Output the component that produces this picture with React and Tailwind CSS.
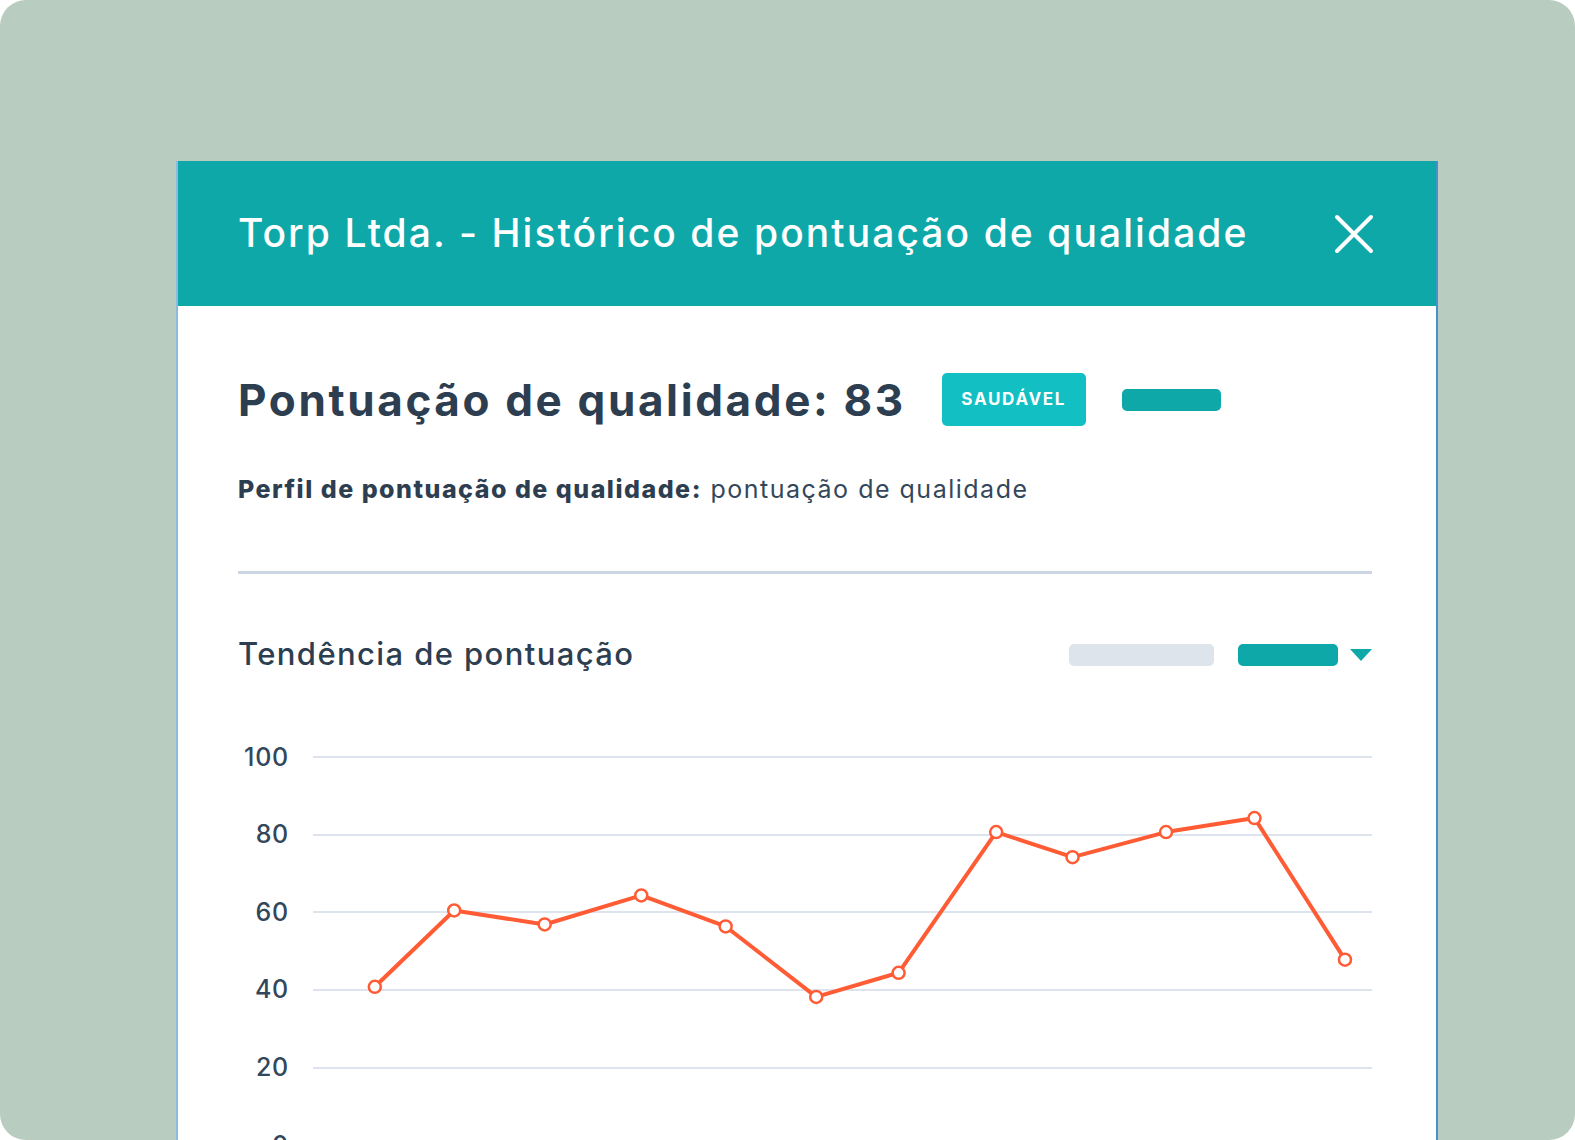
import React from 'react'

const font = { fontFamily: 'Inter, "Noto Sans", sans-serif' }

// score history, already in chart pixel space (x from content left, y from chart top)
const points = [
  [136.7, 267.8],
  [216, 191.5],
  [306.4, 205.5],
  [402.9, 176.4],
  [487.2, 207.5],
  [577.7, 277.9],
  [660, 253.8],
  [757.5, 113.1],
  [833.8, 138.2],
  [927.2, 113.1],
  [1015.6, 99.1],
  [1106, 240.7],
]

const ticks = ['100', '80', '60', '40', '20', '0']

const CloseIcon = () => (
  <svg width="40" height="40" viewBox="0 0 40 40" fill="none">
    <path d="M3 3 L37 37 M37 3 L3 37" stroke="white" strokeWidth="4" strokeLinecap="round" />
  </svg>
)

const TrendChart = () => {
  const line = points.map((p) => p.join(',')).join(' ')
  return (
    <div className="relative mt-[49px]">
      {ticks.map((t) => (
        <div key={t} className="flex h-[77.6px] items-center">
          <span className="w-[51px] text-right text-[25px] font-medium tracking-[0.03em] text-[#33475b]">{t}</span>
          <div className="ml-[24px] h-[2px] flex-1 bg-[#dde4ee]" />
        </div>
      ))}
      <svg className="absolute inset-0 h-full w-full overflow-visible" viewBox="0 0 1133 465.6" preserveAspectRatio="none">
        <polyline points={line} fill="none" stroke="#ff5c35" strokeWidth="4" strokeLinejoin="round" />
        {points.map(([x, y], i) => (
          <circle key={i} cx={x} cy={y} r="6" fill="white" stroke="#ff5c35" strokeWidth="2.5" />
        ))}
      </svg>
    </div>
  )
}

const App = () => {
  return (
    <div className="h-[1140px] w-[1575px] overflow-hidden bg-white" style={font}>
      <div className="h-full overflow-hidden rounded-[26px] bg-[#b8cdbf] pl-[176px] pt-[161px]">
        <div className="h-[1000px] w-[1262px] border-l-2 border-r-2 border-l-[#8dbbe0] border-r-[#4690cc] bg-white">
          {/* header */}
          <div className="flex h-[145px] items-center justify-between bg-[#0fa8a9] pl-[60px] pr-[62px]">
            <h1 className="text-[39px] font-medium tracking-[0.053em] text-white">
              Torp Ltda. - Histórico de pontuação de qualidade
            </h1>
            <CloseIcon />
          </div>

          <div className="pl-[60px] pr-[64px] pt-[67px]">
            {/* score */}
            <div className="flex h-[53px] items-center gap-9">
              <h2 className="text-[44px] font-bold tracking-[0.06em] text-[#2d3e50]">Pontuação de qualidade: 83</h2>
              <span className="flex h-[53px] w-[144px] items-center justify-center rounded-[5px] bg-[#12bfc2] text-[17px] font-bold tracking-[0.1em] text-white">
                SAUDÁVEL
              </span>
              <span className="h-[22px] w-[99px] rounded-[5px] bg-[#0fa8a9]" />
            </div>

            <p className="mt-[45px] text-[25px] tracking-[0.06em] text-[#33475b]">
              <b className="font-extrabold text-[#2d3e50]">Perfil de pontuação de qualidade:</b> pontuação de qualidade
            </p>

            <div className="mt-[62px] h-[3px] bg-[#cbd6e2]" />

            {/* trend header */}
            <div className="mt-[66px] flex h-[30px] items-center">
              <h3 className="flex-1 text-[31px] font-medium tracking-[0.045em] text-[#2d3e50]">Tendência de pontuação</h3>
              <span className="h-[22px] w-[145px] rounded-[5px] bg-[#dde4ec]" />
              <span className="ml-[24px] h-[22px] w-[100px] rounded-[5px] bg-[#0fa8a9]" />
              <svg className="ml-[12px]" width="22" height="12" viewBox="0 0 22 12">
                <path d="M0 0 H22 L11 12 Z" fill="#0fa8a9" />
              </svg>
            </div>

            <TrendChart />
          </div>
        </div>
      </div>
    </div>
  )
}

export default App
